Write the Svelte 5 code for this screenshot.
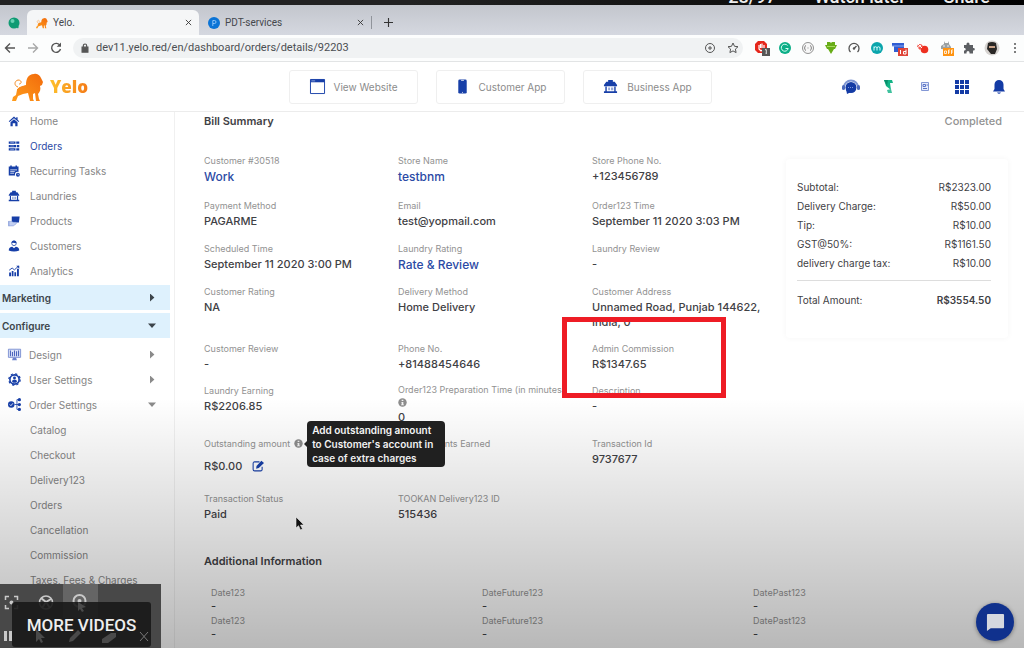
<script lang="ts">
	type Field = {
		label: string;
		value: string;
		kind?: 'link' | 'info' | 'edit' | 'marked';
	};

	const menu = [
		{ icon: 'home', label: 'Home' },
		{ icon: 'orders', label: 'Orders' },
		{ icon: 'calendar', label: 'Recurring Tasks' },
		{ icon: 'store', label: 'Laundries' },
		{ icon: 'products', label: 'Products' },
		{ icon: 'customer', label: 'Customers' },
		{ icon: 'chart', label: 'Analytics' },
	];

	const configure = [
		{ icon: 'design', label: 'Design', open: false },
		{ icon: 'gear', label: 'User Settings', open: false },
		{ icon: 'flow', label: 'Order Settings', open: true },
	];

	const orderSettings = ['Catalog', 'Checkout', 'Delivery123', 'Orders', 'Cancellation', 'Commission', 'Taxes, Fees & Charges'];

	const apps = [
		{ icon: 'window', label: 'View Website' },
		{ icon: 'phone', label: 'Customer App' },
		{ icon: 'store', label: 'Business App' },
	];

	const fields: Field[] = [
		{ label: 'Customer #30518', value: 'Work', kind: 'link' },
		{ label: 'Store Name', value: 'testbnm', kind: 'link' },
		{ label: 'Store Phone No.', value: '+123456789' },
		{ label: 'Payment Method', value: 'PAGARME' },
		{ label: 'Email', value: 'test@yopmail.com' },
		{ label: 'Order123 Time', value: 'September 11 2020 3:03 PM' },
		{ label: 'Scheduled Time', value: 'September 11 2020 3:00 PM' },
		{ label: 'Laundry Rating', value: 'Rate & Review', kind: 'link' },
		{ label: 'Laundry Review', value: '-' },
		{ label: 'Customer Rating', value: 'NA' },
		{ label: 'Delivery Method', value: 'Home Delivery' },
		{ label: 'Customer Address', value: 'Unnamed Road, Punjab 144622, India, 0' },
		{ label: 'Customer Review', value: '-' },
		{ label: 'Phone No.', value: '+81488454646' },
		{ label: 'Admin Commission', value: 'R$1347.65', kind: 'marked' },
		{ label: 'Laundry Earning', value: 'R$2206.85' },
		{ label: 'Order123 Preparation Time (in minutes)', value: '0', kind: 'info' },
		{ label: 'Description', value: '-' },
		{ label: 'Outstanding amount', value: 'R$0.00', kind: 'edit' },
		{ label: 'Loyalty Points Earned', value: '' },
		{ label: 'Transaction Id', value: '9737677' },
		{ label: 'Transaction Status', value: 'Paid' },
		{ label: 'TOOKAN Delivery123 ID', value: '515436' },
	];

	const charges = [
		['Subtotal:', 'R$2323.00'],
		['Delivery Charge:', 'R$50.00'],
		['Tip:', 'R$10.00'],
		['GST@50%:', 'R$1161.50'],
		['delivery charge tax:', 'R$10.00'],
	];

	const extra = ['Date123', 'DateFuture123', 'DatePast123', 'Date123', 'DateFuture123', 'DatePast123'];

	let url = $state('dev11.yelo.red/en/dashboard/orders/details/92203');
</script>

{#snippet icon(name: string)}
	<svg class="icon" viewBox="0 0 16 16" fill="currentColor" aria-hidden="true">
		{#if name === 'home'}
			<path d="M8 2 1 8.400l1 1L8 4.200l6 5.200 1-1-2.200-2V3H11v1.800z" />
			<path d="M3.300 9.600 8 5.600l4.700 4V15H9.700v-4H6.300v4h-3z" />
		{:else if name === 'orders'}
			<path d="M1 2h9v3H1zM11 2h4v3h-4zM1 6.500h10v3H1zM12 6.500h3v3h-3zM1 11h9v3H1zM11 11h4v3h-4z" />
			<path d="M3 3.500h5M3 8h5M3 12.500h5" stroke="#8fa5dd" />
		{:else if name === 'calendar'}
			<path d="M1 2h2V.5h2V2h5V.5h2V2h2v7.300a3.500 3.500 0 0 0-4.500 4.700H1z" />
			<path d="M3 6.500h9M3 8.800h6M3 11h5" stroke="#fff" />
			<circle cx="13.200" cy="13" r="2.600" />
			<path d="M13.200 11.500V13h1.300" stroke="#fff" stroke-width=".7" fill="none" />
		{:else if name === 'store'}
			<path d="M5.500 1h5v2h2L15 6.500v1.200H1V6.500L3.500 3h2z" />
			<path d="M2.500 8H4v5h8V8h1.500v5H15v2H1v-2h1.500z" />
			<path d="M5.500 9h2v3h-2zM8.500 9h2.500v3H8.500z" opacity=".45" />
		{:else if name === 'products'}
			<path d="M5 2h10.500l-1 8H5z" />
			<path d="M1 8.500h3.500l3 1.200h3.500v2L7 14.500H1z" fill="#c3d0f2" stroke="#7f95d6" stroke-width=".7" />
			<path d="M1 8v7" stroke="#7f95d6" />
		{:else if name === 'customer'}
			<circle cx="8" cy="4.500" r="3" fill="#fff" stroke="currentColor" />
			<path d="M4.800 4.200C4.500 1.800 6 .7 8 .7s3.500 1.100 3.200 3.500C9 4.500 7 2.800 4.800 4.200M1 14c0-3.500 2-5 4.700-5L8 11l2.300-2C13 9 15 10.500 15 14c-4 1.600-10 1.600-14 0" />
		{:else if name === 'chart'}
			<path d="M1.500 10H4v5H1.500zM5 8h2.300v7H5zM8.500 9.500h2.300V15H8.500zM12 5h2.500v10H12z" />
			<path d="m1.500 7 4-3 3 2.500 5.500-5" fill="none" stroke="currentColor" stroke-width="1.200" />
			<path d="M11 1h4v4z" />
		{:else if name === 'design'}
			<path d="M.5 1.500h15v10H.5z" fill="#dce4f8" stroke="#6c83cc" />
			<path d="M3 3v7M5.500 5v5M8 3v7M10.500 4v6M13 3v7" stroke="#4c66bd" stroke-width="1.300" />
			<path d="M6 12h4l1 3H5z" fill="#6c83cc" />
		{:else if name === 'gear'}
			<circle cx="8" cy="8" r="5.700" fill="#fff" stroke="currentColor" stroke-width="2" />
			<circle cx="8" cy="8" r="7" fill="none" stroke="currentColor" stroke-width="1.500" stroke-dasharray="2.750" />
			<circle cx="8" cy="6" r="1.800" />
			<path d="M5 11c0-4 6-4 6 0-2 1.500-4 1.500-6 0" />
		{:else if name === 'flow'}
			<circle cx="4" cy="8" r="4" />
			<path d="m2.200 8 1.400 1.500L6 6.500" stroke="#fff" fill="none" />
			<path d="M8 8h6M14 2h-3v12h3" stroke="currentColor" fill="none" />
			<circle cx="14" cy="2" r="2" /><circle cx="14" cy="8" r="2" /><circle cx="14" cy="14" r="2" />
		{:else if name === 'window'}
			<path d="M.5.5h15v15H.5z" fill="#fff" stroke="currentColor" />
			<path d="M.5.5h15v3H.5z" />
			<path d="M1.500 2h4" stroke="#8fa5dd" />
		{:else if name === 'phone'}
			<rect x="3.500" y=".5" width="9" height="15" rx="1.500" />
			<path d="M6.500 1.500h3M7.500 14.300h1" stroke="#fff" stroke-width=".8" />
		{:else if name === 'info'}
			<circle cx="8" cy="8" r="7.500" fill="#8d8d8d" />
			<path d="M6.500 3h3v2.500h-3zM6 7h3.500v4.500h1V13h-5v-1.500h1v-3H6z" fill="#f4f4f4" />
		{:else if name === 'edit'}
			<path d="M10 2.500H3.500q-2 0-2 2v8q0 2 2 2h8q2 0 2-2V9" fill="none" stroke="currentColor" stroke-width="1.400" />
			<path d="m6 8 6.500-7L16 4 9 10.500 5.500 11.500z" />
		{/if}
	</svg>
{/snippet}

<div class="page">
	<div class="player-bar">
		<span>28/97</span>
		<span>Watch later</span>
		<span>Share</span>
	</div>

	<div class="tabs">
		<div class="pinned"><svg viewBox="0 0 12 12"><circle cx="6" cy="6" r="5.500" fill="#109b73" /><circle cx="4.500" cy="4" r="2" fill="#69d1b3" /><path d="m7 9 4 .5-1 2z" fill="#109b73" /></svg></div>
		<div class="tab active">
			<svg viewBox="0 0 32 28"><use href="#lion" /></svg>
			<span>Yelo.</span>
			<button aria-label="Close Yelo."><svg viewBox="0 0 8 8"><path d="m1 1 6 6M7 1 1 7" /></svg></button>
		</div>
		<div class="tab">
			<svg viewBox="0 0 12 12"><circle cx="6" cy="6" r="6" fill="#0b74d6" /><path d="M4.800 9V3.500h1.700a1.500 1.500 0 0 1 0 3H5" stroke="#a7d4ff" fill="none" stroke-width=".8" /></svg>
			<span>PDT-services</span>
			<button aria-label="Close PDT-services"><svg viewBox="0 0 8 8"><path d="m1 1 6 6M7 1 1 7" /></svg></button>
		</div>
		<button class="new-tab" aria-label="New tab"><svg viewBox="0 0 8 8"><path d="M4 0v8M0 4h8" /></svg></button>
	</div>

	<div class="toolbar">
		<button aria-label="Back"><svg viewBox="0 0 12 12"><path d="M11 6H1.500M6 1.500 1.500 6 6 10.500" /></svg></button>
		<button class="dim" aria-label="Forward"><svg viewBox="0 0 12 12"><path d="M1 6h9.500M6 1.500 10.500 6 6 10.500" /></svg></button>
		<button aria-label="Reload"><svg viewBox="0 0 12 12"><path d="M10 3.500A4.500 4.500 0 1 0 10.500 7" /><path d="M11 .5v4.300H6.700z" fill="#555" stroke="none" /></svg></button>
		<div class="address">
			<svg class="lock" viewBox="0 0 12 12"><path d="M2.500 5h7v6h-7z" fill="#555" stroke="#555" /><path d="M4 5V3.200a2 2 0 0 1 4 0V5" /></svg>
			<input type="text" aria-label="Address" bind:value={url} />
			<svg viewBox="0 0 12 12"><circle cx="6" cy="6" r="4.500" stroke-width="1" /><path d="M6 4v4M4 6h4" stroke-width="1" /></svg>
			<svg class="star" viewBox="0 0 12 12"><path d="m6 1 1.500 3.300 3.500.4-2.600 2.400.7 3.500L6 8.900l-3.100 1.700.7-3.500L1 4.700l3.500-.4z" stroke-width="1" /></svg>
		</div>
		<div class="extensions">
			<svg viewBox="0 0 16 16"><path d="M4 1h6l3 3v5l-4 4H4L1 10V4z" fill="#e5271c" /><path d="M5 5v4l2 2 3-2V5M6.500 4v4M8 3.500V8" stroke="#fff" stroke-width="1.200" fill="none" /><rect x="8" y="8" width="8" height="8" fill="#575757" /><path d="m11 10 1.200-.5V14" stroke="#fff" /></svg>
			<svg viewBox="0 0 16 16"><circle cx="8" cy="8" r="6" fill="#0cae87" /><path d="M10.500 5.500a3.500 3.500 0 1 0 .7 3H8.500" stroke="#d6fff4" fill="none" /></svg>
			<svg viewBox="0 0 16 16"><circle cx="8" cy="8" r="5.500" fill="#f7f7f7" stroke="#777" stroke-width=".8" /><path d="M6 5.500q-1.500 0-1 2l-1 .5 1 .5q-.5 2 1 2M10 5.500q1.500 0 1 2l1 .5-1 .5q.5 2-1 2M7.500 8h1" stroke="#777" fill="none" stroke-width=".8" /></svg>
			<svg viewBox="0 0 16 16"><path d="M4 2h3l1 1 1-1h3v3h2L12 9h-1l-3 5-3-5H4L2 5h2z" fill="#68ad18" /><path d="M4 6.500h8" stroke="#a8d860" /></svg>
			<svg viewBox="0 0 16 16"><path d="M4.500 12a5 5 0 1 1 7 0M8 8.500 10.500 6" fill="none" stroke="#555" stroke-width="1.300" /><circle cx="8" cy="8.500" r="1.200" fill="#555" /></svg>
			<svg viewBox="0 0 16 16"><circle cx="8" cy="8" r="6" fill="#0ba5ac" /><path d="M5 10.500V6.500M5 7.500q1.500-1.500 3 0v3M8 7.500q1.500-1.500 3 0v3" stroke="#d9ffff" fill="none" /></svg>
			<svg viewBox="0 0 16 16"><path d="M0 3h12v9H2V6H0z" fill="#315ed3" /><path d="M0 6h12" stroke="#89a6ed" /><rect x="6" y="8" width="10" height="8" fill="#df4539" /><path d="M8.500 10v4M14 9.500V14h-2.500v-2.500H14" stroke="#fff" fill="none" /></svg>
			<svg viewBox="0 0 16 16"><circle cx="9.500" cy="9.500" r="3.800" fill="#ed2f20" /><path d="M3 4h3l2 2-3 4-3-3z" fill="#f35b50" /><path d="m3 4 4 4M2 8l4-3" stroke="#fff" /></svg>
			<svg viewBox="0 0 16 16"><path d="M3 9V6l3-2V1l1 2h3l1-2v3l2 3v3" fill="#9aa0a2" /><path d="M5 6h2M9 6h2" stroke="#f1f1f1" /><rect x="5" y="8" width="11" height="8" fill="#ff9412" /><path d="M6.500 11h2v2.500h-2zM10.500 14v-4H12M10 12h2M13.500 14v-4H15M13 12h2" stroke="#fff" fill="none" stroke-width=".8" /></svg>
			<svg viewBox="0 0 16 16"><path d="M3 5h2.500V4a1.500 1.500 0 0 1 3 0v1H12v3h.5a1.300 1.300 0 0 1 0 2.600H12V13.500H8.500V12.500a1.500 1.500 0 0 0-3 0v1H3v-3h.8a1.300 1.300 0 0 0 0-2.500H3z" fill="#5c5f63" /></svg>
			<svg viewBox="0 0 16 16"><circle cx="8" cy="8" r="7.500" fill="#d6d3d0" /><path d="M4 3q4-2 8 0l1 6-2 5H7L3 9z" fill="#292725" /><path d="M5 6h6v2H5z" fill="#c9a287" /></svg>
			<svg viewBox="0 0 16 16"><circle cx="8" cy="4" r="1" fill="#555" /><circle cx="8" cy="8" r="1" fill="#555" /><circle cx="8" cy="12" r="1" fill="#555" /></svg>
		</div>
	</div>

	<header>
		<a class="logo" href="#home">
			<svg viewBox="0 0 32 28">
				<defs>
					<linearGradient id="mane" x1="0" y1="1" x2="1" y2="0">
						<stop offset="0" stop-color="#ff9d1c" />
						<stop offset="1" stop-color="#f26a0b" />
					</linearGradient>
				</defs>
				<g id="lion">
					<path fill="url(#mane)" d="M5 17c2-4 6-4 9-5 0-6 2-11 8-11 4-1 6 2 7 4l2 4-1 3-2 1c1 3 0 6-2 8l1 5 1 2h-4l-1-8-2 1v5l1 2h-4l-2-8-5 1-5 2-2 5H0l1-4 3-2z" />
					<path d="M5 17q2-3 6-3M6 14c-4-1-4-6 0-7 4 0 4 4 1 4" fill="none" stroke="#f58a1f" />
				</g>
			</svg>
			<span>Yelo</span>
		</a>
		<nav class="apps" aria-label="Apps">
			{#each apps as app (app.label)}
				<a href="#app">{@render icon(app.icon)}<span>{app.label}</span></a>
			{/each}
		</nav>
		<div class="actions">
			<button aria-label="Support"><svg viewBox="0 0 18 18"><path d="M2 9a7 6.500 0 0 1 14 0" fill="none" stroke="#7f96d3" stroke-width="2" /><rect y="7" width="3" height="5" rx="1.500" fill="#4b69bb" /><rect x="15" y="7" width="3" height="5" rx="1.500" fill="#4b69bb" /><circle cx="9" cy="9.500" r="5.500" fill="#143ba5" /><path d="m4 11 1 5 4-2z" fill="#143ba5" /><path d="M6 9.500h6" stroke="#7d96dd" stroke-dasharray="1" /></svg></button>
			<button aria-label="Tookan"><svg viewBox="0 0 18 18"><path d="M5 2h8l1 3h-3l1 7-5-4z" fill="#12b486" /><path d="M5 2h4L8 8z" fill="#0a8e6c" /><path d="m8 12 4-1 1 4H9z" fill="#3fc19e" /></svg></button>
			<button aria-label="News"><svg viewBox="0 0 18 18"><path d="M5.500 4.500h7v8h-7z" fill="#e7ecfa" stroke="#8397d5" /><path d="M7 6.500h2.500v2H7zM7 10.500h4M10.500 7H12" stroke="#5b75c7" fill="none" /></svg></button>
			<button aria-label="Apps"><svg viewBox="0 0 18 18"><path d="M2 2h4v4H2zM7 2h4v4H7zM12 2h4v4h-4zM2 7h4v4H2zM7 7h4v4H7zM12 7h4v4h-4zM2 12h4v4H2zM7 12h4v4H7zM12 12h4v4h-4z" fill="#143ba5" /></svg></button>
			<button aria-label="Notifications"><svg viewBox="0 0 18 18"><path d="M9 2a4.500 4.500 0 0 0-4.500 4.500V11L3 13.500h12L13.500 11V6.500A4.500 4.500 0 0 0 9 2M7 14.500h4q-2 2.500-4 0" fill="#143ba5" /></svg></button>
		</div>
	</header>

	<div class="content">
		<aside>
			<nav class="menu" aria-label="Main">
				{#each menu as item (item.label)}
					<a href="#menu" class:active={item.label === 'Orders'}>{@render icon(item.icon)}<span>{item.label}</span></a>
				{/each}
				<button class="group">Marketing<i class="caret dark"></i></button>
				<button class="group">Configure<i class="caret dark open"></i></button>
				{#each configure as item (item.label)}
					<a href="#configure" class="sub">{@render icon(item.icon)}<span>{item.label}</span><i class="caret" class:open={item.open}></i></a>
				{/each}
				{#each orderSettings as label (label)}
					<a href="#settings" class="leaf">{label}</a>
				{/each}
			</nav>
		</aside>

		<main>
			<div class="title">
				<h2>Bill Summary</h2>
				<span class="status">Completed</span>
			</div>

			<div class="summary">
				<dl class="fields">
					{#each fields as field (field.label)}
						<div class="field {field.kind ?? ''}">
							<dt>
								<span>{field.label}</span>
								{#if field.kind === 'info'}
									{@render icon('info')}
								{:else if field.kind === 'edit'}
									<span class="tip-anchor">
										{@render icon('info')}
										<span class="tooltip" role="tooltip">Add outstanding amount to Customer's account in case of extra charges</span>
									</span>
								{/if}
							</dt>
							<dd>
								{#if field.kind === 'link'}
									<a href="#details">{field.value}</a>
								{:else}
									{field.value}
								{/if}
								{#if field.kind === 'edit'}
									<button aria-label="Edit amount">{@render icon('edit')}</button>
								{/if}
							</dd>
						</div>
					{/each}
				</dl>

				<div class="bill">
					<table>
						<tbody>
							{#each charges as [name, amount] (name)}
								<tr><th scope="row">{name}</th><td>{amount}</td></tr>
							{/each}
						</tbody>
						<tfoot>
							<tr><th scope="row">Total Amount:</th><td>R$3554.50</td></tr>
						</tfoot>
					</table>
				</div>
			</div>

			<h2>Additional Information</h2>
			<dl class="extra">
				{#each extra as label}
					<div><dt>{label}</dt><dd>-</dd></div>
				{/each}
			</dl>
		</main>
	</div>

	<div class="shade"></div>

	<svg class="pointer" viewBox="0 0 10 14"><path d="M1 0v11l2.500-2.300L5.500 13l2-1-2-4H9z" fill="#111" stroke="#eee" stroke-width=".6" /></svg>

	<div class="recorder">
		<svg viewBox="0 0 161 64" fill="none" stroke="#c9c9c9" stroke-width="1.500">
			<path d="M63 0h35v34H63z" fill="#656565" stroke="none" />
			<path d="M5.500 16v-3.500H9M14 12.500h3.500V16M17.500 21v3.500H14M9 24.500H5.500V21" />
			<circle cx="11.500" cy="18.500" r="2" fill="#c9c9c9" stroke="none" />
			<circle cx="46" cy="18.500" r="6.500" />
			<path d="m41 14 5 4 5-3M46 18l-4 6M46 18l4 6" stroke-width="2" />
			<circle cx="79.500" cy="17" r="6" stroke-width="2" />
			<circle cx="79.500" cy="17" r="2" fill="#c9c9c9" stroke="none" />
			<path d="M5.500 47v10M10.500 47v10" stroke-width="3" />
		</svg>
	</div>
	<button class="more">
		<svg viewBox="0 0 139 45" fill="#4a4a4a" aria-hidden="true">
			<path d="m66 0 8 5-4 1 2 3-2 1-2-3-2 2zM24 27v13l3-3 2 4 2-1-2-4h4zM57 40l1-4 8-8 3 3-8 8zM90 37l9-6h5v4l-8 6h-6z" />
			<path d="m128 30 8 9M136 30l-8 9" stroke="#777" />
		</svg>
		<span>MORE VIDEOS</span>
	</button>

	<button class="chat" aria-label="Chat"><svg viewBox="0 0 20 20"><path d="M2 1h16q1 0 1 1v13q0 1-1 1H5l-4 3V2q0-1 1-1" fill="#d5d8df" /></svg></button>
</div>

<style>
	:global(body) {
		margin: 0;
	}

	.page {
		position: relative;
		display: flex;
		flex-direction: column;
		height: 100vh;
		overflow: hidden;
		background: #fff;
		color: #3f4145;
		font-family: Inter, sans-serif;
		font-size: 11px;
	}

	.page *,
	.page *::after {
		box-sizing: border-box;
	}

	a {
		color: inherit;
		text-decoration: none;
	}

	button {
		display: flex;
		align-items: center;
		padding: 0;
		border: 0;
		background: none;
		color: inherit;
		font: inherit;
		cursor: pointer;
	}

	svg {
		display: block;
		flex: none;
	}

	.icon {
		width: 12px;
		height: 12px;
		color: #173fa8;
		overflow: visible;
	}

	/* Video player strip */
	.player-bar {
		flex: none;
		display: flex;
		justify-content: flex-end;
		align-items: flex-end;
		gap: 38px;
		height: 5px;
		padding-right: 34px;
		overflow: hidden;
		background: linear-gradient(90deg, #222 0 40%, #000);
		color: #eee;
		font: 500 18px/16px Roboto, sans-serif;
	}

	/* Browser */
	.tabs {
		flex: none;
		display: flex;
		align-items: flex-end;
		height: 30px;
		background: linear-gradient(#c3c6cd, #d5d8e0);
		color: #45484d;
		font-family: Roboto, sans-serif;
		font-size: 10px;
	}

	.pinned {
		display: flex;
		justify-content: center;
		align-items: center;
		width: 27px;
		height: 25px;
	}

	.pinned svg,
	.tab > svg {
		width: 12px;
		height: 12px;
	}

	.tab {
		display: flex;
		align-items: center;
		gap: 5px;
		width: 172px;
		height: 25px;
		padding: 0 7px 0 9px;
	}

	.tab span {
		flex: 1;
	}

	.tab button svg {
		width: 7px;
		height: 7px;
	}

	.tabs button svg {
		fill: none;
		stroke: #333;
	}

	.tab.active {
		border-radius: 6px 6px 0 0;
		background: #f5f6f7;
	}

	.new-tab {
		height: 13px;
		margin-bottom: 6px;
		padding-left: 12px;
		border-left: 1px solid #90949b;
	}

	.new-tab svg {
		width: 9px;
		height: 9px;
	}

	.toolbar {
		flex: none;
		display: flex;
		align-items: center;
		gap: 11px;
		height: 27px;
		padding: 0 1px 0 4px;
		border-bottom: 1px solid #e2e4e5;
		background: #fcfdfd;
	}

	.toolbar > button svg,
	.address svg {
		width: 12px;
		height: 12px;
		fill: none;
		stroke: #555;
		stroke-width: 1.4;
	}

	.toolbar .dim {
		opacity: 0.5;
	}

	.address {
		flex: 1;
		display: flex;
		align-items: center;
		gap: 5px;
		height: 20px;
		padding: 0 4px 0 6px;
		border-radius: 10px;
		background: #f0f2f3;
	}

	.address .lock {
		height: 10px;
	}

	.address .star {
		margin-left: 6px;
	}

	.address input {
		flex: 1;
		min-width: 0;
		padding: 0;
		border: 0;
		outline: 0;
		background: none;
		color: #4b4e52;
		font: 11px/16px Roboto, sans-serif;
	}

	.extensions {
		display: flex;
		gap: 7px;
	}

	.extensions svg {
		width: 16px;
		height: 16px;
	}

	/* App header */
	header {
		flex: none;
		position: relative;
		z-index: 1;
		display: flex;
		align-items: center;
		height: 50px;
		padding: 0 16px 0 12px;
		border-bottom: 1px solid #ececec;
		background: #fff;
	}

	.logo {
		display: flex;
		align-items: center;
		gap: 6px;
		width: 277px;
		font: 800 17px/24px "Open Sans", sans-serif;
	}

	.logo svg {
		width: 32px;
		height: 28px;
	}

	.logo span {
		background: linear-gradient(90deg, #fdc02c, #f57b17);
		background-clip: text;
		color: transparent;
	}

	.apps {
		display: flex;
		gap: 18px;
	}

	.apps a {
		display: flex;
		justify-content: center;
		align-items: center;
		gap: 9px;
		width: 129px;
		height: 34px;
		border: 1px solid #efefef;
		border-radius: 3px;
		color: #8b8b8b;
		font-size: 10px;
	}

	.apps .icon {
		width: 15px;
		height: 15px;
	}

	.actions {
		display: flex;
		gap: 19px;
		margin-left: auto;
	}

	.actions svg {
		width: 18px;
		height: 18px;
	}

	/* Sidebar */
	.content {
		flex: 1;
		display: flex;
		min-height: 0;
	}

	aside {
		flex: none;
		width: 175px;
		padding-right: 4px;
		overflow: hidden;
		border-right: 1px solid #f0f0f0;
		color: #858585;
		font-size: 10px;
	}

	.menu {
		display: flex;
		flex-direction: column;
		margin-top: -4px;
	}

	.menu a {
		flex: none;
		display: flex;
		align-items: center;
		gap: 10px;
		height: 25px;
		padding: 0 14px 0 8px;
	}

	.menu a.active {
		color: #2b4aa5;
	}

	.menu a.sub {
		gap: 8px;
	}

	.menu a.leaf {
		padding-left: 30px;
	}

	.sub .icon {
		width: 13px;
		height: 13px;
	}

	.group {
		flex: none;
		justify-content: space-between;
		height: 25px;
		margin: 2px 0 1px;
		padding: 0 14px 0 2px;
		background: #def1fd;
		color: #3c444b;
		font-weight: 600;
	}

	.group + a {
		margin-top: 3px;
	}

	.caret {
		width: 8px;
		height: 8px;
		margin-left: auto;
		background: #8a8a8a;
		clip-path: polygon(25% 0, 80% 50%, 25% 100%);
	}

	.caret.dark {
		background: #3c444b;
	}

	.caret.open {
		clip-path: polygon(0 25%, 100% 25%, 50% 80%);
	}

	/* Order details */
	main {
		flex: 1;
		min-width: 0;
		padding-left: 29px;
		overflow: hidden;
	}

	h2 {
		margin: 0;
		font-size: 11px;
		line-height: 18px;
		font-weight: 600;
	}

	.title {
		display: flex;
		justify-content: space-between;
		padding-right: 22px;
	}

	.status {
		color: #929292;
		line-height: 18px;
		font-weight: 500;
	}

	.summary {
		display: flex;
		align-items: flex-start;
		padding-right: 16px;
		margin-top: 22px;
	}

	dl,
	dd {
		margin: 0;
	}

	.fields {
		flex: 1;
		display: grid;
		grid-template-columns: repeat(3, 1fr);
	}

	.field {
		position: relative;
		padding-bottom: 10px;
	}

	.field:nth-child(-n + 9) {
		padding-bottom: 11px;
	}

	.field:nth-child(-n + 3) {
		padding-bottom: 13px;
	}

	dt {
		color: #929292;
		font-size: 9px;
		line-height: 17px;
		white-space: nowrap;
	}

	dd {
		line-height: 15px;
		font-weight: 500;
	}

	.link dd {
		color: #2b4aa5;
		font-size: 12px;
	}

	.info .icon,
	.edit dt .icon {
		width: 9px;
		height: 9px;
	}

	.info dt {
		margin-top: -1px;
	}

	.info .icon {
		margin-bottom: 3px;
	}

	.edit dt,
	.edit dd {
		display: flex;
		align-items: center;
		gap: 4px;
	}

	.edit dd {
		gap: 10px;
		line-height: 28px;
	}

	.tip-anchor {
		position: relative;
	}

	.tooltip {
		position: absolute;
		top: 50%;
		left: 13px;
		z-index: 1;
		width: 138px;
		padding: 2px 5px;
		border-radius: 4px;
		background: #222;
		color: #fff;
		font-size: 10px;
		line-height: 14px;
		font-weight: 600;
		white-space: normal;
		transform: translateY(-50%);
	}

	.tooltip::before {
		content: '';
		position: absolute;
		top: 50%;
		right: 100%;
		margin-top: -3px;
		border: 3px solid transparent;
		border-right-color: #222;
	}

	.marked::after {
		content: '';
		position: absolute;
		top: -23px;
		left: -30px;
		z-index: 1;
		width: 164px;
		height: 81px;
		border: 5px solid #ee1c25;
	}

	.bill {
		flex: none;
		width: 222px;
		margin-top: 7px;
		padding: 19px 17px 28px 11px;
		border-radius: 4px;
		box-shadow: 0 0 6px #f5f5f5;
	}

	table {
		width: 100%;
		border-collapse: collapse;
		font-size: 10px;
		line-height: 20px;
	}

	tbody tr {
		line-height: 19px;
	}

	th,
	td {
		padding: 0;
		text-align: left;
		font-weight: 400;
	}

	td {
		text-align: right;
	}

	tbody tr:last-child > * {
		padding-bottom: 7px;
	}

	tfoot > tr > * {
		padding-top: 9px;
		border-top: 1px solid #ddd;
	}

	tfoot td {
		font-weight: 600;
	}

	.summary + h2 {
		margin-top: 20px;
	}

	.extra {
		display: grid;
		grid-template-columns: repeat(3, 1fr);
		padding: 14px 0 0 7px;
	}

	.extra dd {
		line-height: 11px;
	}

	/* Player overlays */
	.shade {
		position: absolute;
		inset: auto 0 0;
		height: 250px;
		z-index: 2;
		background: linear-gradient(transparent, rgb(0 0 0 / 0.28));
		pointer-events: none;
	}

	.pointer {
		position: absolute;
		top: 517px;
		left: 295px;
		z-index: 3;
		width: 10px;
		height: 14px;
	}

	.recorder {
		position: absolute;
		bottom: 0;
		left: 0;
		z-index: 3;
		background: #484848;
	}

	.recorder svg {
		width: 161px;
		height: 64px;
	}

	.more {
		position: absolute;
		bottom: 1px;
		left: 12px;
		z-index: 4;
		justify-content: center;
		width: 139px;
		height: 45px;
		border-radius: 3px;
		background: rgb(24 24 24 / 0.9);
		color: #eee;
		font: 500 17px/24px Roboto, sans-serif;
	}

	.more svg {
		position: absolute;
		inset: 0;
		width: 139px;
		height: 45px;
	}

	.more span {
		position: relative;
	}

	.chat {
		position: absolute;
		right: 10px;
		bottom: 7px;
		z-index: 4;
		justify-content: center;
		width: 38px;
		height: 38px;
		border-radius: 50%;
		background: #10318d;
		box-shadow: 0 1px 4px rgb(0 0 0 / 0.4);
	}

	.chat svg {
		width: 19px;
		height: 19px;
	}
</style>
